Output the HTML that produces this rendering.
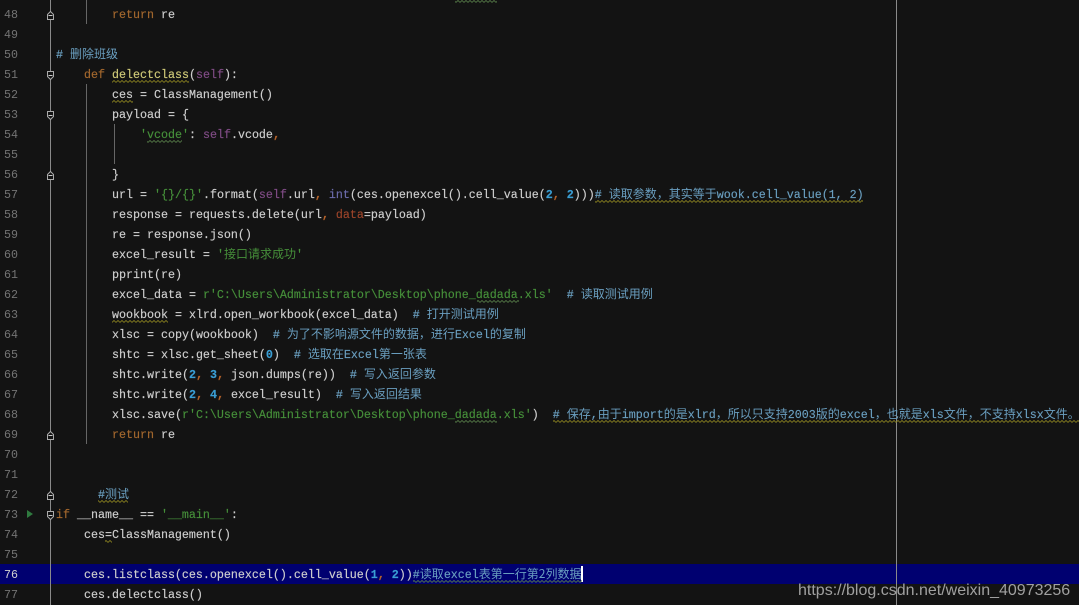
<!DOCTYPE html>
<html>
<head>
<meta charset="utf-8">
<style>
html,body{margin:0;padding:0;background:#131313}
#p{position:relative;width:1079px;height:605px;overflow:hidden;background:#131313;font-family:"Liberation Mono","Noto Sans CJK SC",monospace;font-size:11.67px;color:#cfcfcf}
.n{position:absolute;left:4px;height:20px;line-height:22px;color:#747474;font-size:11.67px}
.t{position:absolute;height:20px;line-height:22px;white-space:pre;-webkit-text-stroke:.15px currentColor}
i{font-style:normal;font-size:12px;line-height:0;font-family:"Noto Sans CJK SC","WenQuanYi Zen Hei",sans-serif;-webkit-text-stroke:0}
.k{color:#a4682e}.s{color:#46903a}.f{color:#804c86}.c{color:#6a9fc0}.u{color:#3a9ed4;font-weight:bold}.y{color:#d0ca78}.b{color:#6c6cac}.o{color:#b4622a;font-weight:bold}.d{color:#9c442a}
#hl{position:absolute;left:0;top:564px;width:1079px;height:20px;background:#000070}
.g{position:absolute;background:#8a8a8a;width:1px}
#w{position:absolute;left:798px;top:581px;font:16px/20px "Liberation Sans",sans-serif;color:#a0a0a0;white-space:nowrap}
#car{position:absolute;left:581px;top:566px;width:2px;height:16px;background:#fff}
svg{position:absolute;left:0;top:0}
</style>
</head>
<body>
<div id="p">
<div id="hl"></div>
<div class="g" style="left:50px;top:0;height:605px"></div>
<div class="g" style="left:86px;top:0;height:24px;background:#666"></div>
<div class="g" style="left:86px;top:84px;height:360px;background:#666"></div>
<div class="g" style="left:114px;top:124px;height:40px;background:#666"></div>
<div class="g" style="left:896px;top:0;height:605px;background:#8a8a8a"></div>

<div class="n" style="top:4px">48</div>
<div class="n" style="top:24px">49</div>
<div class="n" style="top:44px">50</div>
<div class="n" style="top:64px">51</div>
<div class="n" style="top:84px">52</div>
<div class="n" style="top:104px">53</div>
<div class="n" style="top:124px">54</div>
<div class="n" style="top:144px">55</div>
<div class="n" style="top:164px">56</div>
<div class="n" style="top:184px">57</div>
<div class="n" style="top:204px">58</div>
<div class="n" style="top:224px">59</div>
<div class="n" style="top:244px">60</div>
<div class="n" style="top:264px">61</div>
<div class="n" style="top:284px">62</div>
<div class="n" style="top:304px">63</div>
<div class="n" style="top:324px">64</div>
<div class="n" style="top:344px">65</div>
<div class="n" style="top:364px">66</div>
<div class="n" style="top:384px">67</div>
<div class="n" style="top:404px">68</div>
<div class="n" style="top:424px">69</div>
<div class="n" style="top:444px">70</div>
<div class="n" style="top:464px">71</div>
<div class="n" style="top:484px">72</div>
<div class="n" style="top:504px">73</div>
<div class="n" style="top:524px">74</div>
<div class="n" style="top:544px">75</div>
<div class="n" style="top:564px;color:#d0d0d0">76</div>
<div class="n" style="top:584px">77</div>

<div class="t" style="left:112px;top:4px"><span class="k">return</span> re</div>
<div class="t" style="left:56px;top:44px"><span class="c"># <i>删除班级</i></span></div>
<div class="t" style="left:84px;top:64px"><span class="k">def</span> <span class="y">delectclass</span>(<span class="f">self</span>):</div>
<div class="t" style="left:112px;top:84px">ces = ClassManagement()</div>
<div class="t" style="left:112px;top:104px">payload = {</div>
<div class="t" style="left:140px;top:124px"><span class="s">'vcode'</span>: <span class="f">self</span>.vcode<span class="o">,</span></div>
<div class="t" style="left:112px;top:164px">}</div>
<div class="t" style="left:112px;top:184px">url = <span class="s">'{}/{}'</span>.format(<span class="f">self</span>.url<span class="o">,</span> <span class="b">int</span>(ces.openexcel().cell_value(<span class="u">2</span><span class="o">,</span> <span class="u">2</span>)))<span class="c"># <i>读取参数，其实等于</i>wook.cell_value(1, 2)</span></div>
<div class="t" style="left:112px;top:204px">response = requests.delete(url<span class="o">,</span> <span class="d">data</span>=payload)</div>
<div class="t" style="left:112px;top:224px">re = response.json()</div>
<div class="t" style="left:112px;top:244px">excel_result = <span class="s">'<i>接口请求成功</i>'</span></div>
<div class="t" style="left:112px;top:264px">pprint(re)</div>
<div class="t" style="left:112px;top:284px">excel_data = <span class="s">r'C:\Users\Administrator\Desktop\phone_dadada.xls'</span>  <span class="c"># <i>读取测试用例</i></span></div>
<div class="t" style="left:112px;top:304px">wookbook = xlrd.open_workbook(excel_data)  <span class="c"># <i>打开测试用例</i></span></div>
<div class="t" style="left:112px;top:324px">xlsc = copy(wookbook)  <span class="c"># <i>为了不影响源文件的数据，进行</i>Excel<i>的复制</i></span></div>
<div class="t" style="left:112px;top:344px">shtc = xlsc.get_sheet(<span class="u">0</span>)  <span class="c"># <i>选取在</i>Excel<i>第一张表</i></span></div>
<div class="t" style="left:112px;top:364px">shtc.write(<span class="u">2</span><span class="o">,</span> <span class="u">3</span><span class="o">,</span> json.dumps(re))  <span class="c"># <i>写入返回参数</i></span></div>
<div class="t" style="left:112px;top:384px">shtc.write(<span class="u">2</span><span class="o">,</span> <span class="u">4</span><span class="o">,</span> excel_result)  <span class="c"># <i>写入返回结果</i></span></div>
<div class="t" style="left:112px;top:404px">xlsc.save(<span class="s">r'C:\Users\Administrator\Desktop\phone_dadada.xls'</span>)  <span class="c"># <i>保存</i>,<i>由于</i>import<i>的是</i>xlrd<i>，所以只支持</i>2003<i>版的</i>excel<i>，也就是</i>xls<i>文件，不支持</i>xlsx<i>文件。</i></span></div>
<div class="t" style="left:112px;top:424px"><span class="k">return</span> re</div>
<div class="t" style="left:98px;top:484px"><span class="c">#<i>测试</i></span></div>
<div class="t" style="left:56px;top:504px"><span class="k">if</span> __name__ == <span class="s">'__main__'</span>:</div>
<div class="t" style="left:84px;top:524px">ces=ClassManagement()</div>
<div class="t" style="left:84px;top:564px">ces.listclass(ces.openexcel().cell_value(<span class="u">1</span><span class="o">,</span> <span class="u">2</span>))<span class="c">#<i>读取</i>excel<i>表第一行第2列数据</i></span></div>
<div class="t" style="left:84px;top:584px">ces.delectclass()</div>
<div id="car"></div>

<svg width="1079" height="605" viewBox="0 0 1079 605">
<defs>
<pattern id="zy" width="4" height="3" patternUnits="userSpaceOnUse"><path d="M0 2.5L2 .5L4 2.5" fill="none" stroke="#8f8620" stroke-width=".8"/></pattern>
<pattern id="zg" width="4" height="3" patternUnits="userSpaceOnUse"><path d="M0 2.5L2 .5L4 2.5" fill="none" stroke="#58804a" stroke-width=".8"/></pattern>
<g id="up"><path d="M47.5 19.5V14.5L50.5 11.5L53.5 14.5V19.5Z" fill="#131313" stroke="#aaa"/><path d="M48.5 15.5H52.5" stroke="#c8c8c8"/></g>
<g id="dn"><path d="M47.5 11.5V16.5L50.5 19.5L53.5 16.5V11.5Z" fill="#131313" stroke="#aaa"/><path d="M48.5 15.5H52.5" stroke="#c8c8c8"/></g>
</defs>
<rect x="455" y="0" width="42" height="3" fill="url(#zg)"/>
<g transform="translate(0,80)"><rect x="112" width="77" height="3" fill="url(#zy)"/></g>
<g transform="translate(0,100)"><rect x="112" width="21" height="3" fill="url(#zy)"/></g>
<g transform="translate(0,140)"><rect x="147" width="35" height="3" fill="url(#zg)"/></g>
<g transform="translate(0,200)"><rect x="595" width="268" height="3" fill="url(#zy)"/></g>
<g transform="translate(0,300)"><rect x="477" width="42" height="3" fill="url(#zg)"/></g>
<g transform="translate(0,320)"><rect x="112" width="56" height="3" fill="url(#zy)"/></g>
<g transform="translate(0,420)"><rect x="455" width="42" height="3" fill="url(#zg)"/><rect x="553" width="526" height="3" fill="url(#zy)"/></g>
<g transform="translate(0,500)"><rect x="98" width="30" height="3" fill="url(#zy)"/></g>
<g transform="translate(0,540)"><rect x="105" width="7" height="3" fill="url(#zy)"/></g>
<g transform="translate(0,580)"><rect x="413" width="169" height="3" fill="url(#zg)"/></g>
<use href="#up" y="0"/>
<use href="#dn" y="60"/>
<use href="#dn" y="100"/>
<use href="#up" y="160"/>
<use href="#up" y="420"/>
<use href="#up" y="480"/>
<use href="#dn" y="500"/>
<path d="M27 510L33 514L27 518Z" fill="#2f7a3f"/>
</svg>
<div id="w">https://blog.csdn.net/weixin_40973256</div>
</div>
</body>
</html>
